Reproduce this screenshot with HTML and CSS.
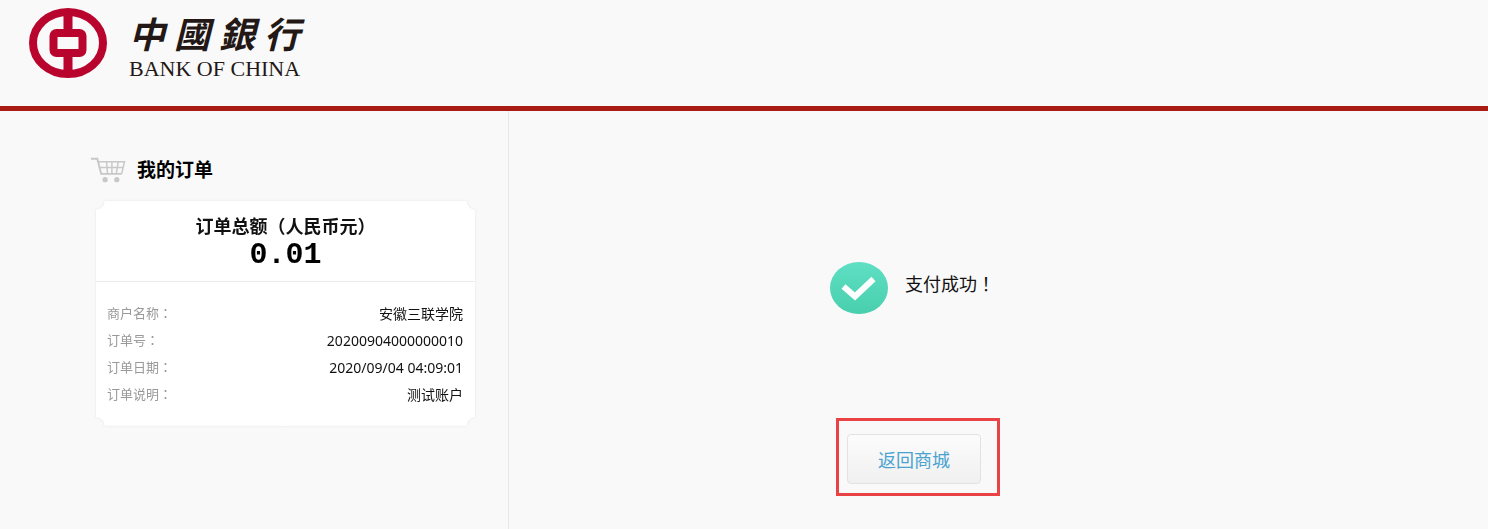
FILE: index.html
```html
<!DOCTYPE html>
<html lang="zh-CN">
<head>
    <meta charset="UTF-8">
    <meta name="viewport" content="width=device-width, initial-scale=1.0">
    <title>中国银行 - 支付成功</title>
    <link rel="stylesheet" href="styles.css">
</head>
<body>

    <!-- header -->
    <header class="header">
        <svg class="logo" viewBox="0 0 78 70" aria-hidden="true">
            <ellipse cx="39" cy="35" rx="35" ry="31" fill="none" stroke="#b9052d" stroke-width="8"/>
            <path d="M39 5v20M39 47v18" stroke="#b9052d" stroke-width="9"/>
            <rect x="24.500" y="25" width="29" height="20" rx="3" fill="#f9f9f9" stroke="#b9052d" stroke-width="8"/>
        </svg>
        <div class="brand">
            <div class="brand-cn" lang="zh-TW"><span>中</span><span>國</span><span>銀</span><span>行</span></div>
            <span class="brand-en">BANK OF CHINA</span>
        </div>
    </header>

    <div class="container">
        <!-- order info -->
        <aside class="sidebar">
            <h2 class="order-title">
                <svg class="cart" viewBox="0 0 36 26" fill="none" stroke="#c8c8c8" aria-hidden="true">
                    <path d="M0 1.500h6.500l4 15.500h21" stroke-width="2"/>
                    <path d="M7 4.500h27.500l-3 12.500M8.500 10.500h24M16 4.500l1 12.500M21.500 4.500v12.500M28 4.500l-2 12.500" stroke-width="1.500"/>
                    <circle cx="14.500" cy="23" r="2.700" fill="#c8c8c8" stroke="none"/>
                    <circle cx="26.500" cy="23" r="2.700" fill="#c8c8c8" stroke="none"/>
                </svg>
                我的订单
            </h2>
            <div class="card">
                <div class="total">
                    <p class="total-label">订单总额<span class="mark" lang="zh-TW">（</span>人民币元<span class="mark" lang="zh-TW">）</span></p>
                    <p class="total-num">0.01</p>
                </div>
                <dl class="detail">
                    <div class="row"><dt>商户名称<span class="mark" lang="zh-TW">：</span></dt><dd>安徽三联学院</dd></div>
                    <div class="row"><dt>订单号<span class="mark" lang="zh-TW">：</span></dt><dd>20200904000000010</dd></div>
                    <div class="row"><dt>订单日期<span class="mark" lang="zh-TW">：</span></dt><dd>2020/09/04 04:09:01</dd></div>
                    <div class="row"><dt>订单说明<span class="mark" lang="zh-TW">：</span></dt><dd>测试账户</dd></div>
                </dl>
            </div>
        </aside>

        <!-- payment result -->
        <main class="result">
            <div class="status">
                <svg class="ok" viewBox="0 0 58 52" aria-hidden="true">
                    <defs>
                        <linearGradient id="green" x1="0" y1="0" x2="0" y2="1">
                            <stop offset="0" stop-color="#5fdfc4"/>
                            <stop offset="1" stop-color="#48cfad"/>
                        </linearGradient>
                    </defs>
                    <ellipse cx="29" cy="26" rx="29" ry="26" fill="url(#green)"/>
                    <path d="M13.500 24.500L25 34.500L43.500 17" fill="none" stroke="#fff" stroke-width="6"/>
                </svg>
                <p class="status-text">支付成功<span class="mark" lang="zh-TW">！</span></p>
            </div>
            <div class="highlight">
                <button type="button" class="back">返回商城</button>
            </div>
        </main>
    </div>

</body>
</html>
```
FILE: styles.css
```css
*{
    margin: 0;
    padding: 0;
    box-sizing: border-box;
}
body{
    display: flex;
    flex-direction: column;
    min-height: 100vh;
    font-family: "Noto Sans", "Noto Sans CJK SC", sans-serif;
    color: #111;
    background: #f9f9f9;
}
.mark{
    font-family: "Noto Sans CJK TC", sans-serif;
    line-height: 1;
}

/* header */
.header{
    display: flex;
    align-items: flex-start;
    gap: 22px;
    padding: 8px 29px 24px;
    border-bottom: 5px solid #a91c14;
}
.logo{
    width: 78px;
    height: 70px;
}
.brand{
    display: flex;
    flex-direction: column;
    color: #231815;
}
.brand-cn{
    display: flex;
    justify-content: space-between;
    font-family: "Noto Sans CJK TC", sans-serif;
    font-size: 36px;
    font-style: italic;
    font-weight: bold;
    line-height: 48px;
}
.brand-en{
    font-family: "Liberation Serif", serif;
    font-size: 22px;
    line-height: 26px;
}

.container{
    display: flex;
    flex: 1;
}

/* order info */
.sidebar{
    width: 509px;
    padding: 44px 33px 44px 91px;
    border-right: 1px solid #e6e6e6;
}
.order-title{
    display: flex;
    align-items: center;
    gap: 11px;
    margin-bottom: 16px;
    color: #000;
    font-size: 19px;
    line-height: 30px;
}
.cart{
    width: 35px;
    height: 26px;
}
/* paper ticket, a round notch in each corner */
.card{
    margin-left: 5px;
    background:
        radial-gradient(circle at 0 0, transparent 8px, #fff 9px) left top,
        radial-gradient(circle at 100% 0, transparent 8px, #fff 9px) right top,
        radial-gradient(circle at 0 100%, transparent 8px, #fff 9px) left bottom,
        radial-gradient(circle at 100% 100%, transparent 8px, #fff 9px) right bottom;
    background-size: 51% 51%;
    background-repeat: no-repeat;
    filter: drop-shadow(0 0 1px #e4e4e4);
}
.total{
    padding: 11px 0;
    border-bottom: 1px solid #ececec;
    text-align: center;
}
.total-label{
    font-size: 18px;
    font-weight: bold;
    line-height: 28px;
}
.total-num{
    color: #000;
    font-family: "Liberation Mono", monospace;
    font-size: 30px;
    font-weight: bold;
    line-height: 30px;
}
.detail{
    padding: 18px 12px 18px 11px;
}
.row{
    display: flex;
    justify-content: space-between;
    height: 27px;
    line-height: 27px;
}
.row dt{
    color: #999;
    font-size: 13px;
}
.row dd{
    font-size: 14px;
}

/* payment result */
.result{
    flex: 1;
    padding: 151px 0 33px 321px;
}
.status{
    display: flex;
    gap: 17px;
}
.ok{
    width: 58px;
    height: 52px;
}
.status-text{
    font-size: 18px;
    line-height: 44px;
}
.highlight{
    width: 164px;
    margin: 104px 0 0 6px;
    padding: 13px 16px 9px 8px;
    border: 3px solid #ea4345;
}
.back{
    display: block;
    width: 100%;
    height: 50px;
    border: 1px solid #e2e2e2;
    border-radius: 4px;
    color: #4aa3cf;
    background: linear-gradient(#fcfcfc, #f0f0f0);
    font-family: inherit;
    font-size: 18px;
    cursor: pointer;
}
.back:hover{
    background: #f0f0f0;
}
```
